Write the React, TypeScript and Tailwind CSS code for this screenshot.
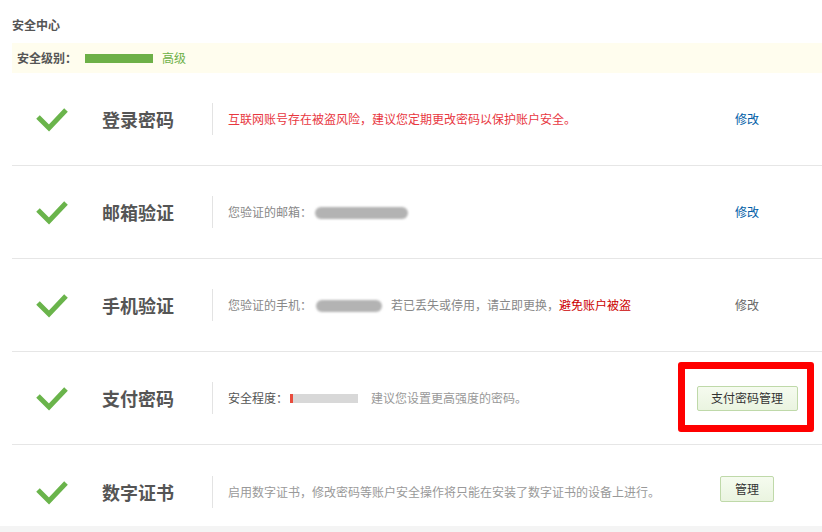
import React from "react";

const font = { fontFamily: '"Noto Sans CJK SC", "Noto Sans", sans-serif' };

function Check() {
  return (
    <svg width="32" height="26" viewBox="0 0 32 26">
      <polyline points="2,11 13,22 30,4" fill="none" stroke="#6ab44b" strokeWidth="5" strokeLinecap="butt" strokeLinejoin="miter" />
    </svg>
  );
}

function Blob({ w }: { w: number }) {
  return (
    <span className="inline-block align-middle relative" style={{ width: w, height: 12 }}>
      <span className="absolute inset-0 rounded-full bg-[#b3b3b3] blur-[1px]" />
    </span>
  );
}

function Row({
  title,
  children,
  action,
  last,
}: {
  title: string;
  children: React.ReactNode;
  action: React.ReactNode;
  last?: boolean;
}) {
  return (
    <div className={`flex items-center shrink-0 ${last ? "h-[93px]" : "h-[93px] border-b border-[#e6e6e6]"}`}>
      <div className="ml-[24px] w-[32px] flex items-center">
        <Check />
      </div>
      <div className="ml-[34px] w-[110px] text-[18px] font-bold text-[#555] leading-none">{title}</div>
      <div className="w-px h-[32px] bg-[#e3e3e3]" />
      <div className="flex-1 pl-[15px] text-[12px] leading-none flex items-center">{children}</div>
      <div className="w-[150px] flex justify-center text-[12px]">{action}</div>
    </div>
  );
}

export default function App() {
  return (
    <div className="w-[822px] h-[532px] bg-white overflow-hidden flex flex-col" style={font}>
      <div className="pl-[12px] pt-[16px] h-[43px] shrink-0 text-[12px] font-bold text-[#555]">安全中心</div>
      <div className="ml-[12px] h-[30px] shrink-0 bg-[#fffdee] flex items-center pl-[5px] text-[12px]">
        <span className="font-bold text-[#555]">安全级别：</span>
        <span className="ml-[8px] w-[68px] h-[9px] bg-[#6db048]" />
        <span className="ml-[9px] text-[#6db048]">高级</span>
      </div>
      <div className="ml-[12px] h-[453px] shrink-0 overflow-hidden flex flex-col">
        <Row title="登录密码" action={<span className="text-[#005ea7]">修改</span>}>
          <span className="text-[#e8373f]">互联网账号存在被盗风险，建议您定期更改密码以保护账户安全。</span>
        </Row>
        <Row title="邮箱验证" action={<span className="text-[#005ea7]">修改</span>}>
          <span className="text-[#888]">您验证的邮箱：</span>
          <span className="ml-[3px]"><Blob w={93} /></span>
        </Row>
        <Row title="手机验证" action={<span className="text-[#666]">修改</span>}>
          <span className="text-[#888]">您验证的手机：</span>
          <span className="ml-[4px]"><Blob w={66} /></span>
          <span className="ml-[9px] text-[#888]">若已丢失或停用，请立即更换，</span>
          <span className="text-[#cc0000]">避免账户被盗</span>
        </Row>
        <Row
          title="支付密码"
          action={
            <div className="relative">
              <div className="absolute -left-[19px] -top-[24px] w-[136px] h-[70px] border-[7px] border-[#ff0000] rounded-[3px]" />
              <div className="relative w-[101px] h-[25px] flex items-center justify-center border border-[#bfd9a9] rounded-[2px] bg-gradient-to-b from-[#f5fbef] to-[#eaf4e0] text-[#333]">
                支付密码管理
              </div>
            </div>
          }
        >
          <span className="text-[#555]">安全程度：</span>
          <span className="ml-[2px] w-[68px] h-[9px] bg-[#d8d8d8] flex">
            <span className="w-[3px] h-full bg-[#e94c3d]" />
          </span>
          <span className="ml-[13px] text-[#999]">建议您设置更高强度的密码。</span>
        </Row>
        <Row
          title="数字证书"
          last
          action={
            <div className="w-[54px] h-[26px] flex items-center justify-center border border-[#bfd9a9] rounded-[2px] bg-gradient-to-b from-[#f5fbef] to-[#eaf4e0] text-[#333] -mt-[6px]">
              管理
            </div>
          }
        >
          <span className="text-[#999]">启用数字证书，修改密码等账户安全操作将只能在安装了数字证书的设备上进行。</span>
        </Row>
      </div>
      <div className="flex-1 bg-[#f4f4f4]" />
    </div>
  );
}
